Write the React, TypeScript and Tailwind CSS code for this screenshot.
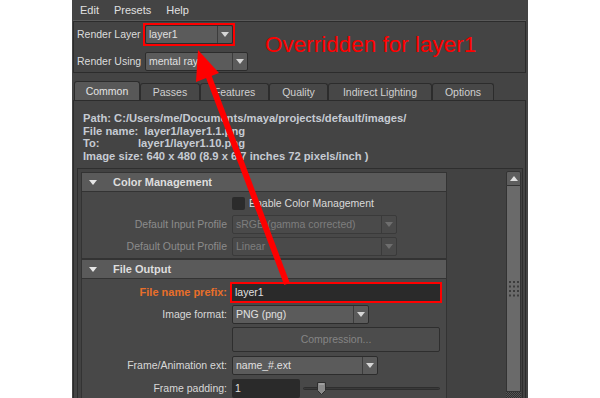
import type { ReactNode } from "react";

type DropdownProps = {
  value: string;
  className: string;
  disabled?: boolean;
};

function Caret({ color = "#d6d6d6" }: { color?: string }) {
  return (
    <svg width="8" height="5" viewBox="0 0 8 5">
      <path d="M0 0h8L4 5z" fill={color} />
    </svg>
  );
}

function Dropdown({ value, className, disabled }: DropdownProps) {
  return (
    <div
      className={`flex h-[19px] items-stretch rounded-[2px] border ${
        disabled
          ? "border-[#3a3a3a] bg-[#4a4a4a] text-[#7e7e7e]"
          : "border-[#2c2c2c] bg-[#5b5b5b] text-[#e0e0e0]"
      } ${className}`}
    >
      <span className="flex flex-1 items-center truncate pl-[3px]">{value}</span>
      <span
        className={`flex w-[15px] items-center justify-center border-l ${
          disabled ? "border-[#3a3a3a]" : "border-[#3c3c3c]"
        }`}
      >
        <Caret color={disabled ? "#6e6e6e" : "#d6d6d6"} />
      </span>
    </div>
  );
}

function FrameHeader({ title }: { title: string }) {
  return (
    <div className="flex h-[19px] items-center border-b border-[#333] bg-[#5a5a5a]">
      <span className="ml-[7px] flex w-[24px]">
        <Caret color="#e6e6e6" />
      </span>
      <span className="text-[11px] font-bold text-[#dedede]">{title}</span>
    </div>
  );
}

function Row({
  label,
  labelClass = "text-[#d8d8d8]",
  className = "",
  children,
}: {
  label?: string;
  labelClass?: string;
  className?: string;
  children: ReactNode;
}) {
  return (
    <div className={`flex items-center ${className}`}>
      <span className={`w-[148px] shrink-0 pr-[3px] text-right ${labelClass}`}>{label}</span>
      {children}
    </div>
  );
}

function GripDots() {
  const dots = [];
  for (let r = 0; r < 4; r++) {
    for (let c = 0; c < 3; c++) {
      dots.push(<rect key={`${r}-${c}`} x={c * 4} y={r * 4.5} width="2" height="2" fill="#3c3c3c" />);
    }
  }
  return (
    <svg width="10" height="16" viewBox="0 0 10 16">
      {dots}
    </svg>
  );
}

export default function App() {
  const tabs = ["Common", "Passes", "Features", "Quality", "Indirect Lighting", "Options"];
  const tabWidths = ["w-[66px]", "w-[60px]", "w-[69px]", "w-[59px]", "w-[104px]", "w-[62px]"];

  return (
    <div className="relative flex h-[398px] w-[600px] justify-center overflow-hidden bg-white font-['Liberation_Sans',Arial,sans-serif] text-[10.5px] leading-none">
      <div className="flex w-[456px] flex-col bg-[#444444] text-[#dcdcdc]">
        {/* menu bar */}
        <div className="flex h-[21px] items-center gap-[15px] pl-[8px] text-[11px] text-[#e0e0e0]">
          <span>Edit</span>
          <span>Presets</span>
          <span>Help</span>
        </div>

        {/* render layer panel */}
        <div className="ml-px mr-[2px] flex h-[52px] flex-col border border-[#2c2c2c] shadow-[0_-1px_0_#5a5a5a]">
          <div className="mt-px flex h-[23px] items-center">
            <span className="w-[69px] pl-[3px]">Render Layer</span>
            <div className="border-2 border-[#ff0000]">
              <Dropdown value="layer1" className="w-[88px]" />
            </div>
          </div>
          <div className="mt-[5px] flex h-[20px] items-center">
            <span className="w-[71px] pl-[3px]">Render Using</span>
            <Dropdown value="mental ray" className="w-[103px]" />
          </div>
        </div>

        {/* tabs */}
        <div className="ml-[2px] mt-[8px] flex h-[19px] items-end">
          {tabs.map((t, i) => (
            <div
              key={t}
              className={`flex items-center justify-center rounded-t-[3px] border border-b-0 border-[#2c2c2c] ${tabWidths[i]} ${
                i === 0 ? "h-[19px] bg-[#585858] text-[#e4e4e4]" : "h-[17px] bg-[#474747] text-[#d0d0d0]"
              }`}
            >
              {t}
            </div>
          ))}
        </div>

        {/* tab pane */}
        <div className="ml-px mr-[2px] flex flex-1 flex-col border border-b-0 border-[#2c2c2c] bg-[#444]">
          <div className="pl-[9px] pt-[11px] text-[11.2px] font-bold leading-[12.5px] text-[#c6cbd3]">
            <p>Path: C:/Users/me/Documents/maya/projects/default/images/</p>
            <p>
              File name:<span className="ml-[6px]">layer1/layer1.1.png</span>
            </p>
            <p className="flex">
              <span className="w-[55px]">To:</span>
              <span>layer1/layer1.10.png</span>
            </p>
            <p>Image size: 640 x 480 (8.9 x 6.7 inches 72 pixels/inch )</p>
          </div>

          {/* scroll area */}
          <div className="ml-[3px] mr-[2px] mt-[6px] flex flex-1 border border-b-0 border-[#2e2e2e] bg-[#424242]">
            <div className="ml-[3px] mt-[3px] flex w-[366px] flex-col">
              {/* Color Management */}
              <div className="border border-[#333] bg-[#484848]">
                <FrameHeader title="Color Management" />
                <div className="flex flex-col pb-[2px] pt-[3px]">
                  <Row className="h-[16px]">
                    <span className="ml-[2px] h-[13px] w-[13px] rounded-[2px] bg-[#2b2b2b]" />
                    <span className="ml-[4px] text-[#dadada]">Enable Color Management</span>
                  </Row>
                  <Row label="Default Input Profile" labelClass="text-[#8c8c8c]" className="mt-[4px]">
                    <Dropdown value="sRGB (gamma corrected)" className="ml-[2px] w-[165px]" disabled />
                  </Row>
                  <Row label="Default Output Profile" labelClass="text-[#8c8c8c]" className="mt-[3px]">
                    <Dropdown value="Linear" className="ml-[2px] w-[165px]" disabled />
                  </Row>
                </div>
              </div>

              {/* File Output */}
              <div className="border border-b-0 border-[#333] bg-[#484848]">
                <FrameHeader title="File Output" />
                <div className="flex flex-col pt-[3px]">
                  <Row label="File name prefix:" labelClass="font-bold text-[11px] text-[#e86f2a]">
                    <div className="border-2 border-[#ff0000]">
                      <div className="flex h-[17px] w-[208px] items-center bg-[#2a2a2a] pl-[3px] text-[#e0e0e0]">
                        layer1
                      </div>
                    </div>
                  </Row>
                  <Row label="Image format:" className="mt-[2px]">
                    <Dropdown value="PNG (png)" className="ml-[2px] w-[137px]" />
                  </Row>
                  <Row className="mt-[3px]">
                    <div className="ml-[2px] flex h-[25px] w-[208px] items-center justify-center rounded-[2px] border border-[#2e2e2e] bg-[#4c4c4c] text-[#858585]">
                      Compression...
                    </div>
                  </Row>
                  <Row label="Frame/Animation ext:" className="mt-[4px]">
                    <Dropdown value="name_#.ext" className="ml-[2px] w-[146px]" />
                  </Row>
                  <Row label="Frame padding:" className="mt-[4px]">
                    <div className="ml-[2px] flex h-[19px] w-[68px] items-center rounded-[2px] bg-[#2a2a2a] pl-[3px] text-[#e0e0e0]">
                      1
                    </div>
                    <div className="relative ml-[3px] flex h-[19px] w-[137px] items-center">
                      <div className="h-[3px] w-full rounded-full border border-[#2e2e2e] bg-[#3a3a3a]" />
                      <svg className="absolute left-[14px] top-[3px]" width="9" height="13" viewBox="0 0 9 13">
                        <path d="M0.5 0.5h8v8l-4 4l-4-4z" fill="#8a8a8a" stroke="#2e2e2e" />
                        <path d="M2 2h5" stroke="#b5b5b5" />
                      </svg>
                    </div>
                  </Row>
                </div>
              </div>
            </div>

            <div className="flex-1" />

            {/* scrollbar */}
            <div className="mr-[1px] mt-[2px] flex w-[15px] flex-col">
              <div className="flex h-[15px] items-center justify-center rounded-t-[2px] border border-[#333] bg-[#5e5e5e]">
                <svg width="8" height="5" viewBox="0 0 8 5">
                  <path d="M0 5h8L4 0z" fill="#e0e0e0" />
                </svg>
              </div>
              <div className="flex h-[206px] items-center justify-center border border-t-0 border-[#333] bg-[#6a6a6a]">
                <GripDots />
              </div>
              <div className="flex-1 bg-[repeating-conic-gradient(#2e2e2e_0_25%,#555_0_50%)] bg-[length:2px_2px]" />
            </div>
          </div>
        </div>
      </div>

      {/* annotation */}
      <span className="absolute left-[265px] top-[34px] text-[22.5px] leading-none text-[#ff0000]">
        Overridden for layer1
      </span>
      <svg className="pointer-events-none absolute left-0 top-0" width="600" height="398" viewBox="0 0 600 398">
        <line x1="287" y1="284" x2="207" y2="72" stroke="#ff0000" strokeWidth="6" />
        <polygon points="198,50 219,73 196,82" fill="#ff0000" />
      </svg>
    </div>
  );
}
